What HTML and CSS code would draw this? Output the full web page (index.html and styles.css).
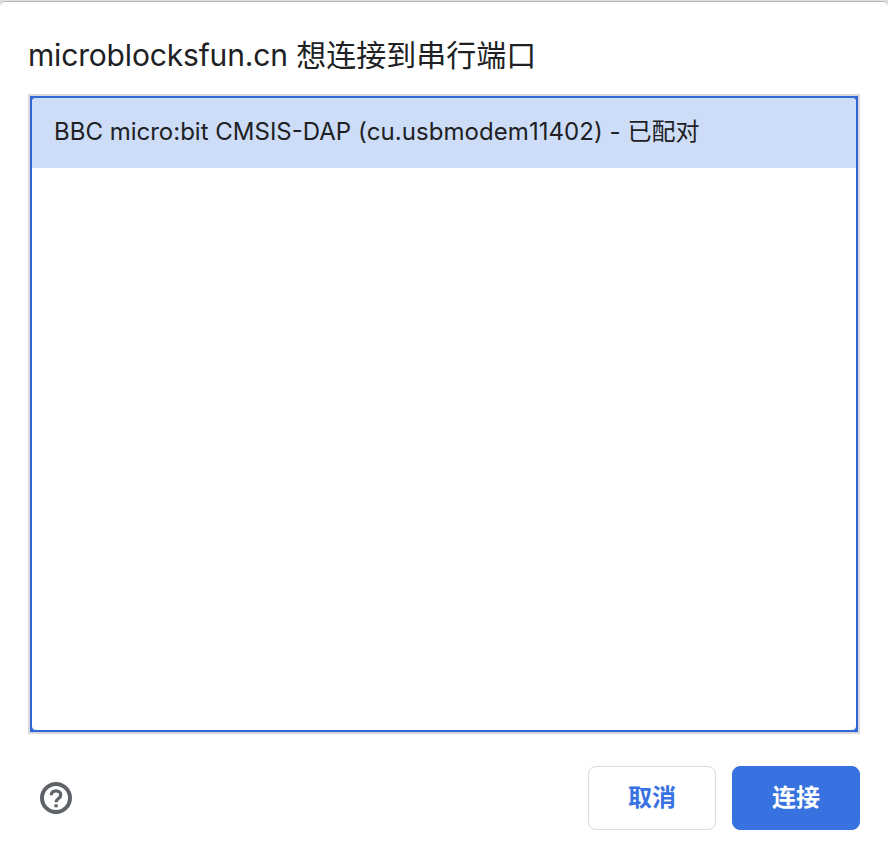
FILE: index.html
```html
<!DOCTYPE html>
<html lang="zh-CN">
<head>
<meta charset="utf-8">
<title>microblocksfun.cn</title>
<link rel="stylesheet" href="styles.css">
</head>
<body>
<main class="dialog">
  <h1 class="title"><span class="origin">microblocksfun.cn</span> <span class="request">想连接到串行端口</span></h1>
  <div class="list">
    <div class="content">
      <div class="row"><span>BBC micro:bit CMSIS-DAP </span><span class="port">(cu.usbmodem11402) - </span><span>已配对</span></div>
    </div>
  </div>
  <footer class="footer">
    <svg class="help" viewBox="0 0 32 32" width="32" height="32" fill="none" stroke="#5f6368"><circle cx="16" cy="16" r="14" stroke-width="4"/><path d="M11.200 13.200c0-2.700 2-4.400 4.800-4.400s4.800 1.700 4.800 4.100c0 3.600-4.700 3.800-4.700 7.400" stroke-width="3.200"/><path d="M16.100 22.300v3" stroke-width="3.400"/></svg>
    <div class="actions">
      <button class="button">取消</button>
      <button class="button primary">连接</button>
    </div>
  </footer>
</main>
</body>
</html>
```
FILE: styles.css
```css
* { box-sizing: border-box; }
body { margin: 0; background: #e0e0e0; font-family: Inter, "Noto Sans CJK SC", sans-serif; color: #202124; }
.dialog { width: 888px; height: 857px; margin-top: 1px; padding: 0 28px 27px; border-top: 1px solid #b8b8b8; border-radius: 5px 5px 0 0; background: #fff; display: flex; flex-direction: column; }
.title { margin: 0; height: 92px; flex: none; padding-top: 33px; font-size: 30px; line-height: 40px; font-weight: 400; white-space: nowrap; }
.origin { letter-spacing: -0.17px; }
.list { height: 640px; flex: none; border: 2px solid #d8d9de; padding: 2px; background: #3367d6; }
.content { height: 100%; overflow: hidden; border-radius: 4px; background: #fff; }
.row { height: 70px; padding: 0 22px; background: #cdddf7; font-size: 24px; line-height: 68px; white-space: nowrap; }
.port { font-kerning: none; letter-spacing: 0.06px; }
.footer { display: flex; flex: none; justify-content: space-between; align-items: center; margin-top: 32px; height: 64px; padding-left: 12px; }
.actions { display: flex; gap: 16px; }
.button { width: 128px; height: 64px; border: 1px solid #dadce0; border-radius: 8px; background: #fff; color: #3871e0; font: 700 24px Inter, "Noto Sans CJK SC", sans-serif; padding: 0 0 5px; }
.primary { border-color: #3871e0; background: #3871e0; color: #fff; }
```
